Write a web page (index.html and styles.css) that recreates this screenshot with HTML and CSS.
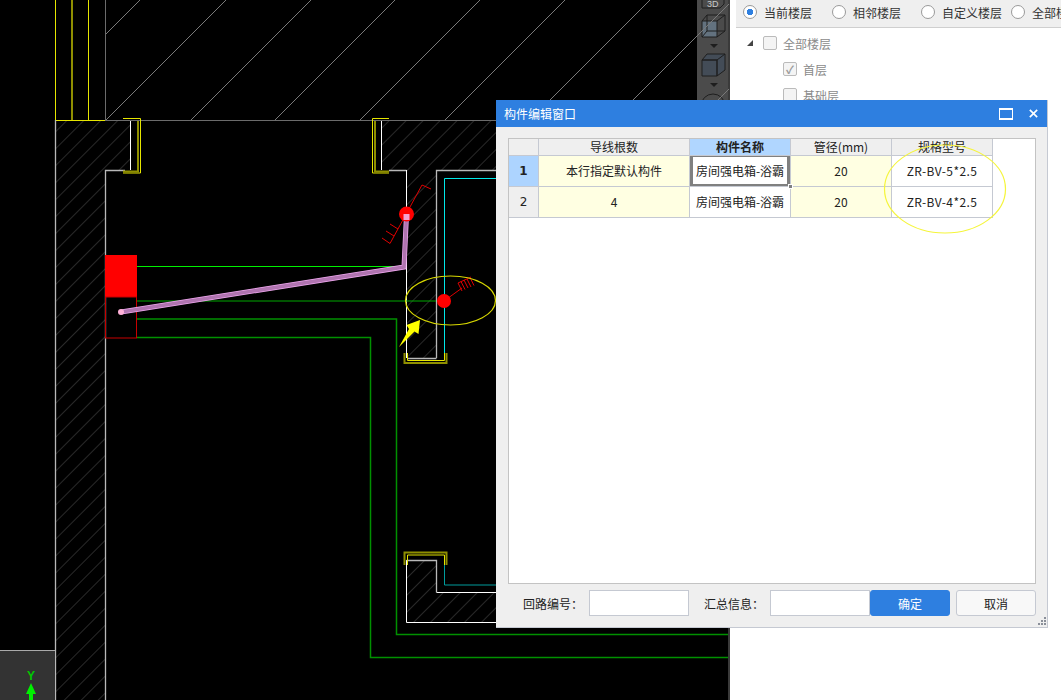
FILE: index.html
```html
<!DOCTYPE html>
<html lang="zh-CN">
<head>
<meta charset="utf-8">
<title>构件编辑窗口</title>
<link rel="stylesheet" href="styles.css">
</head>
<body>
<div class="app">
  <div class="cad">
    <svg class="drawing" width="730" height="700" viewBox="0 0 730 700">
      <defs>
        <pattern id="hatch" width="12" height="12" patternUnits="userSpaceOnUse" patternTransform="rotate(45)">
          <line x1="0" y1="0" x2="0" y2="12" class="hatch-line"/>
        </pattern>
      </defs>
      <!-- toolbar strip -->
      <rect class="tb" x="697" y="0" width="31" height="200"/>
      <rect class="tb-edge" x="728" y="0" width="2" height="700"/>
      <path class="tb-icon" d="M702 0V8H720L724 4V0"/>
      <text class="tb-3d" x="707" y="7">3D</text>
      <path class="tb-cube-a" d="M702 21H717V37H702Z"/>
      <path class="tb-cube-line" d="M702 21L707 15H725V31L717 37M717 21L725 15M702 37L707 31H725M707 15V31"/>
      <path class="tb-arrow" d="M710 44H718L714 48Z"/>
      <path class="tb-cube-b" d="M702 60H717V76H702ZM702 60L707 54H725V70L717 76V60Z"/>
      <path class="tb-cube-line" d="M717 60L725 54"/>
      <path class="tb-arrow" d="M710 83H718L714 87Z"/>
      <circle class="tb-cube-line" cx="713" cy="106" r="12"/>

      <!-- wall fills -->
      <path fill="url(#hatch)" d="M55 121H130V170H105V700H55Z"/>
      <path fill="url(#hatch)" d="M381 121H496V170H436V358H407V170H381Z"/>
      <path fill="url(#hatch)" d="M407 560H436V592H496V622H407Z"/>

      <!-- upper diagonal lines -->
      <path class="diag" d="M105 35L140 0M106 120L226 0M191 120L311 0M275 120L395 0M360 120L480 0M445 120L565 0M530 120L650 0M613 120L729 4M698 120L729 89"/>
      <path class="grey-line" d="M105.500 0V120M105 120.500H697"/>
      <path class="y-a" d="M55.500 0V120M88.500 0V120M55 120.500H105"/>
      <path class="y-b" d="M72 0V120"/>

      <!-- wall outlines -->
      <path class="wall" d="M55.500 120V700M105.500 700V170.500H125M389 170.500H406.500M436.500 358V170.500H496"/>
      <path class="white" d="M130.500 121V170M381.500 121V170M406.500 170V358M406.500 560V622.500H496M436.500 592.500H496"/>
      <path class="wall" d="M406.500 560.500H436.500V592.500M407 358.500H436.500"/>

      <!-- door frames -->
      <path class="y-a" d="M123 118.500H140.500V173H123M389 118.500H372.500V173H389"/>
      <path class="y-b" d="M138 121V171.500H123M375 121V171.500H389"/>
      <path class="y-a" d="M407.500 353V360.500H444.500V353"/>
      <path class="y-b" d="M404.500 353V363H446.500V353"/>
      <path class="y-a" d="M407.500 565V555H444.500V565"/>
      <path class="y-b" d="M404.500 565V552.500H446.500V565"/>

      <!-- cyan -->
      <path class="cyan" d="M444.500 353V178.500H496"/>
      <path class="teal" d="M444.500 565V585H496"/>

      <!-- green runs -->
      <path class="g-bright" d="M137 266.500H406"/>
      <path class="g-mid" d="M137 301H436"/>
      <path class="g-dark" d="M137 319H396.500V634.500H728"/>
      <path class="g-dark" d="M137 337.500H370.500V657.500H728"/>

      <!-- distribution box -->
      <rect class="box-fill" x="105" y="255" width="32" height="42"/>
      <rect class="box-line" x="105.500" y="297" width="31" height="41"/>

      <!-- pipe -->
      <path class="pipe-o" d="M121 312L404 267L406.500 215"/>
      <path class="pipe-i" d="M121 312L404 267L406.500 215"/>
      <circle class="pipe-end" cx="121" cy="312" r="3"/>

      <!-- sockets -->
      <path class="red" d="M422 185L431 189M422 185L390 243.500L382 238M394 236L386 231M398 229L390 224"/>
      <circle class="node" cx="406.500" cy="214" r="7.500"/>
      <rect class="node-core" x="403.500" y="214" width="6" height="6"/>
      <path class="red" d="M444 301L462 288M458 283L471 277M458 283L462 291M461 281.500L465 289.500M464 280L468 288M467 279L471 287M470 277.500L474 285.500"/>
      <circle class="node" cx="444" cy="301" r="7"/>

      <!-- annotation -->
      <ellipse class="ring" cx="450.500" cy="300.500" rx="45" ry="24.500"/>
      <path class="arrow" d="M399 347L409 329L406.500 325L420 320L418.500 334L414.500 331.500Z"/>

      <!-- axis box -->
      <rect class="axis-box" x="0" y="650" width="55" height="50"/>
      <path class="axis-line" d="M0 650.500H55"/>
      <text class="axis-y" x="31" y="680">Y</text>
      <path class="axis-arrow" d="M31 683L36 694H33V700H29V694H26Z"/>
    </svg>
  </div>

  <aside class="side">
    <div class="floor-bar">
      <label class="radio-item"><span class="radio radio-on"></span>当前楼层</label>
      <label class="radio-item"><span class="radio"></span>相邻楼层</label>
      <label class="radio-item"><span class="radio"></span>自定义楼层</label>
      <label class="radio-item"><span class="radio"></span>全部楼层</label>
    </div>
    <ul class="tree">
      <li class="tree-row">
        <span class="tree-arrow"></span><span class="check"></span>全部楼层
      </li>
      <li class="tree-row tree-child">
        <span class="check check-on">✓</span>首层
      </li>
      <li class="tree-row tree-child">
        <span class="check"></span>基础层
      </li>
    </ul>
  </aside>

  <section class="dialog">
    <header class="dialog-title">
      <span class="dialog-name">构件编辑窗口</span>
      <span class="win-max"></span>
      <svg class="win-close" width="9" height="9" viewBox="0 0 11 11"><path d="M1 1L10 10M10 1L1 10"/></svg>
    </header>
    <div class="dialog-body">
      <div class="grid-panel">
        <table class="grid">
          <colgroup>
            <col class="c-num"><col class="c-wide"><col class="c-std"><col class="c-std"><col class="c-std">
          </colgroup>
          <thead>
            <tr>
              <th class="corner"></th>
              <th>导线根数</th>
              <th class="th-active">构件名称</th>
              <th>管径(mm)</th>
              <th>规格型号</th>
            </tr>
          </thead>
          <tbody>
            <tr>
              <td class="row-no row-active">1</td>
              <td class="cell-y">本行指定默认构件</td>
              <td class="cell-sel"><span class="clip">房间强电箱-浴霸</span><i class="handle"></i></td>
              <td class="cell-y">20</td>
              <td class="cell-spec">ZR-BV-5*2.5</td>
            </tr>
            <tr>
              <td class="row-no">2</td>
              <td class="cell-y">4</td>
              <td><span class="clip">房间强电箱-浴霸</span></td>
              <td class="cell-y">20</td>
              <td class="cell-spec">ZR-BV-4*2.5</td>
            </tr>
          </tbody>
        </table>
      </div>
      <div class="dialog-foot">
        <span class="foot-label">回路编号：</span>
        <input class="foot-input" type="text">
        <span class="foot-label foot-label-2">汇总信息：</span>
        <input class="foot-input" type="text">
        <button class="btn btn-ok" type="button">确定</button>
        <button class="btn btn-cancel" type="button">取消</button>
      </div>
    </div>
    <svg class="grip" width="8" height="9" viewBox="0 0 8 9"><path d="M6 0h2v2H6zM3 3h2v2H3zM6 3h2v2H6zM0 6h2v2H0zM3 6h2v2H3zM6 6h2v2H6z"/></svg>
  </section>

  <svg class="callout" width="124" height="92" viewBox="0 0 124 92"><ellipse cx="62" cy="46" rx="60.500" ry="44"/></svg>
</div>
</body>
</html>
```

FILE: styles.css
```css
* { box-sizing: border-box; }
html, body { margin: 0; padding: 0; background: #000; }
body { font-family: "Noto Sans CJK SC", "Noto Sans", sans-serif; font-size: 12px; color: #222; }

.app { position: relative; display: flex; width: 1061px; height: 700px; overflow: hidden; background: #fff; }
.cad { flex: 0 0 730px; height: 700px; background: #000; }
.drawing { display: block; }

/* CAD strokes */
.drawing path:where(:not([fill])), .drawing ellipse, .drawing circle { fill: none; }
.hatch-line { stroke: #444; stroke-width: 1.2; }
.diag { stroke: #7a7a7a; stroke-width: 1; }
.grey-line { stroke: #6b6b6b; stroke-width: 1; }
.y-a { stroke: #e6e600; stroke-width: 1; }
.y-b { stroke: #8f8f00; stroke-width: 2; }
.wall { stroke: #b8b8b8; stroke-width: 1.3; }
.white { stroke: #fff; stroke-width: 1; }
.cyan { stroke: #00e8e8; stroke-width: 1; }
.teal { stroke: #009c9c; stroke-width: 1; }
.g-bright { stroke: #00f000; stroke-width: 1; }
.g-mid { stroke: #00a800; stroke-width: 1; }
.g-dark { stroke: #009000; stroke-width: 1.5; }
.box-fill { fill: #f00; }
.box-line { fill: none; stroke: #c80000; stroke-width: 1; }
.drawing .pipe-o { stroke: #f0a8f0; stroke-width: 5; }
.drawing .pipe-i { stroke: #b074b0; stroke-width: 3.600; }
.drawing .pipe-end { fill: #ffb0d8; }
.red { stroke: #e00000; stroke-width: 1; }
.drawing .node { fill: #f00; }
.node-core { fill: #f4a0d0; }
.ring { stroke: #d8d800; stroke-width: 1.2; }
.drawing .arrow { fill: #ff0; }

/* toolbar */
.tb { fill: #4b4b4b; }
.tb-edge { fill: #3a3a3a; }
.tb-icon { stroke: #1e1e1e; stroke-width: 1; }
.tb-3d { fill: #c8c8c8; font-size: 9px; font-family: "Liberation Sans", sans-serif; }
.drawing .tb-cube-a { fill: #63727f; stroke: #1e1e1e; }
.drawing .tb-cube-b { fill: #434c57; stroke: #1e1e1e; }
.tb-cube-line { stroke: #1e1e1e; stroke-width: 1; }
.drawing .tb-arrow { fill: #1e1e1e; }

/* axis */
.axis-box { fill: #333; }
.axis-line { stroke: #aaa; stroke-width: 1; }
.axis-y { fill: #00c800; font-size: 12px; font-weight: 700; font-family: "Liberation Sans", sans-serif; text-anchor: middle; }
.drawing .axis-arrow { fill: #00f000; }

/* side panel */
.side { flex: 1; min-width: 0; padding-left: 6px; background: #fff; overflow: hidden; }
.floor-bar { display: flex; align-items: center; height: 28px; padding: 0 0 3px 7px; background: #efefef; border-bottom: 1px solid #cfcfcf; white-space: nowrap; color: #333; }
.radio-item { display: flex; flex: none; align-items: center; gap: 7px; margin-right: 20px; }
.radio { display: block; flex: none; width: 14px; height: 14px; border: 1px solid #9a9a9a; border-radius: 50%; background: #fff; }
.radio-on { background: radial-gradient(circle, #2e7fe0 0 3px, #fff 3.5px); }
.radio-item:nth-child(3) { margin-right: 9px; }
.tree { margin: 0; padding: 0; list-style: none; color: #8a8a8a; }
.tree-row { display: flex; align-items: center; height: 26px; padding-left: 27px; white-space: nowrap; }
.tree-row:first-child { margin-top: 2px; }
.tree-arrow { width: 0; height: 0; margin-left: -16px; margin-right: 10px; border-left: 6px solid transparent; border-bottom: 6px solid #444; }
.tree-child { padding-left: 47px; }
.check { display: flex; align-items: center; justify-content: center; width: 14px; height: 14px; margin-right: 6px; border: 1px solid #bbb; border-radius: 2px; background: #f4f4f4; font-size: 11px; font-weight: 700; line-height: 1; color: #999; }

/* dialog */
.dialog { position: absolute; left: 496px; top: 100px; display: flex; flex-direction: column; width: 552px; height: 528px; background: #efefef; border-right: 1px solid #c5c9d2; border-bottom: 1px solid #c5c9d2; }
.dialog-title { display: flex; flex: none; align-items: center; height: 27px; padding: 0 9px 0 8px; background: #2e7fe0; color: #fff; }
.dialog-name { flex: 1; }
.win-max { width: 14px; height: 12px; margin-right: 16px; border: 1px solid #fff; border-top-width: 2px; border-bottom-width: 2px; }
.win-close { display: block; }
.win-close path { fill: none; stroke: #fff; stroke-width: 2; }
.dialog-body { display: flex; flex: 1; flex-direction: column; min-height: 0; padding: 11px 11px 11px 12px; }
.grid-panel { flex: 1; min-height: 0; background: #fff; border: 1px solid #c3c3c3; }

.grid { table-layout: fixed; width: 484px; border-collapse: separate; border-spacing: 0; }
.c-num { width: 30px; }
.c-wide { width: 151px; }
.c-std { width: 101px; }
.grid th, .grid td { padding: 0; border-right: 1px solid #c5c9d2; border-bottom: 1px solid #c5c9d2; text-align: center; font-size: 12px; line-height: 16px; color: #222; white-space: nowrap; }
.grid th { height: 17px; background: #efefef; font-weight: 400; line-height: 14px; }
.grid td { height: 31px; background: #fff; }
.grid .th-active { background: #b0d6ff; font-weight: 700; }
.grid .row-no { background: #efefef; font-family: "DejaVu Sans", sans-serif; }
.grid .row-active { background: #add4ff; font-weight: 700; }
.grid .cell-y { background: #ffffe2; }
.grid .cell-spec { letter-spacing: 0.4px; }
.clip { display: block; width: 96px; margin: 0 auto; overflow: hidden; }
.grid .cell-sel { position: relative; box-shadow: inset 3px 0 #808080, inset -3px 0 #808080, inset 0 1px #808080, inset 0 -2px #808080; }
.handle { position: absolute; right: -3px; bottom: -3px; width: 5px; height: 5px; background: #808080; border: 1px solid #fff; }

.dialog-foot { display: flex; flex: none; align-items: center; height: 26px; margin-top: 6px; padding-left: 15px; }
.foot-label { flex: none; width: 60px; margin-right: 6px; color: #222; }
.foot-label-2 { margin-left: 15px; }
.foot-input { flex: none; width: 100px; height: 26px; padding: 0; background: #fff; border: 1px solid #c5c9d2; outline: 0; }
.btn { flex: none; width: 80px; height: 26px; padding: 0; font: inherit; border: 1px solid #c5c9d2; border-radius: 3px; }
.btn-ok { background: #2e7fe0; border-color: #2e7fe0; color: #fff; }
.btn-cancel { margin-left: 6px; background: #f8f8f8; color: #222; }
.grip { position: absolute; right: 1px; bottom: 1px; display: block; }
.grip path { fill: #8a8f99; }

.callout { position: absolute; left: 883px; top: 143px; display: block; pointer-events: none; }
.callout ellipse { fill: none; stroke: #f5f53c; stroke-width: 1.2; }
```
